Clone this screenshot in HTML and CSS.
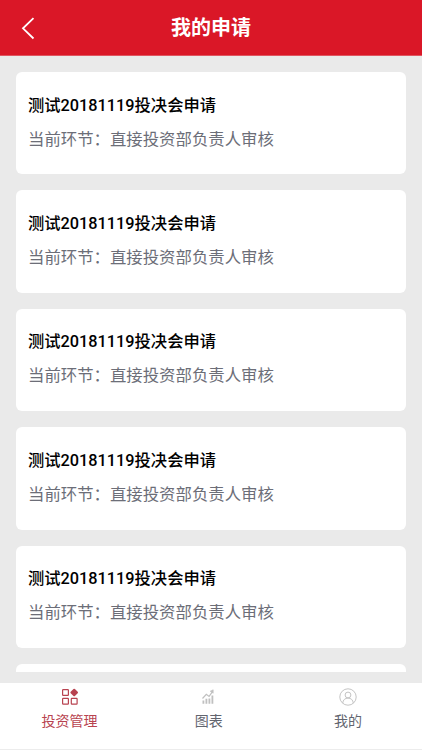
FILE: index.html
```
<!DOCTYPE html>
<html lang="zh-CN">

<head>
    <meta charset="UTF-8" />
    <meta name="viewport" content="width=device-width, initial-scale=1.0" />
    <title>我的申请</title>
    <link rel="stylesheet" href="styles.css">
</head>

<body>
    <header class="navbar">
        <a class="back" href="#" aria-label="返回">
            <svg width="14" height="24" viewBox="0 0 14 24" fill="none" stroke="#fff" stroke-width="1.8">
                <path d="M12.5 2.2 2 12.3l10.5 10.2" />
            </svg>
        </a>
        <h1>我的申请</h1>
    </header>

    <main class="list">
        <div class="card">
            <h2>测试20181119投决会申请</h2>
            <p>当前环节：直接投资部负责人审核</p>
        </div>
        <div class="card">
            <h2>测试20181119投决会申请</h2>
            <p>当前环节：直接投资部负责人审核</p>
        </div>
        <div class="card">
            <h2>测试20181119投决会申请</h2>
            <p>当前环节：直接投资部负责人审核</p>
        </div>
        <div class="card">
            <h2>测试20181119投决会申请</h2>
            <p>当前环节：直接投资部负责人审核</p>
        </div>
        <div class="card">
            <h2>测试20181119投决会申请</h2>
            <p>当前环节：直接投资部负责人审核</p>
        </div>
        <!-- next card, cut off by the scroll area -->
        <div class="card"></div>
    </main>

    <nav class="tabbar">
        <a class="tab active" href="#">
            <svg width="18" height="18" viewBox="0 0 18 18" fill="none" stroke="currentColor" stroke-width="1.2">
                <rect x="1.6" y="1.6" width="5.8" height="5.8" rx=".6" />
                <path d="M13.2 1.7l2.8 2.8-2.8 2.8-2.8-2.8z" fill="currentColor" stroke-width="2" stroke-linejoin="round" />
                <rect x="1.6" y="10.3" width="5.8" height="5.8" rx=".6" />
                <rect x="10.3" y="10.3" width="5.8" height="5.8" rx=".6" />
            </svg>
            <span>投资管理</span>
        </a>
        <a class="tab" href="#">
            <svg width="18" height="18" viewBox="0 0 18 18" fill="none" stroke="#c0c0c0" stroke-width="1.2">
                <path d="M2.5 10.5 6.3 6.3l2.8 2.1 3.6-5" />
                <path d="M10.2 3.2l3-1.4v3.4z" fill="#c0c0c0" stroke-width=".6" />
                <path d="M3.4 15.8v-3.3M6.4 15.8v-5M9.4 15.8v-5.2M12.4 15.8V7.5" stroke-width="1.8" />
            </svg>
            <span>图表</span>
        </a>
        <a class="tab" href="#">
            <svg width="18" height="18" viewBox="0 0 18 18" fill="none" stroke="#c4c4c4" stroke-width="1">
                <circle cx="9" cy="9" r="8.2" />
                <circle cx="9" cy="7" r="2.9" />
                <path d="M3.7 15.1c.3-3.2 2.4-5 5.3-5s5 1.8 5.3 5" />
            </svg>
            <span>我的</span>
        </a>
    </nav>
</body>

</html>
```

FILE: styles.css
```
* {
    box-sizing: border-box;
}

body {
    font-family: Roboto, "Noto Sans CJK SC", sans-serif;
    background: #eaeaea;
    margin: 0;
    height: 750px;
    display: flex;
    flex-direction: column;
    overflow: hidden;
}

a {
    text-decoration: none;
}

h1,
h2,
p {
    margin: 0;
}

.navbar {
    flex: none;
    height: 56px;
    padding: 0 21px;
    background: #da1727;
    border-bottom: 1px solid #e05560;
    display: grid;
    grid-template-columns: 40px 1fr 40px;
    align-items: center;
}

.back {
    height: 24px;
}

.back svg {
    display: block;
}

.navbar h1 {
    font-size: 20px;
    line-height: 28px;
    font-weight: 700;
    text-align: center;
    color: #fff;
}

.list {
    flex: none;
    height: 616px;
    padding: 16px 16.5px 0 16px;
    overflow: hidden;
}

.card {
    height: 102.4px;
    margin-bottom: 16px;
    padding: 20.6px 12px;
    background: #fff;
    border-radius: 6px;
}

.card h2 {
    font-size: 16.3px;
    line-height: 26px;
    font-weight: 500;
    color: #000;
}

.card p {
    margin-top: 8px;
    font-size: 16.4px;
    line-height: 26px;
    font-weight: 400;
    color: #6c6e78;
}

.tabbar {
    flex: none;
    height: 67.5px;
    margin-top: 10.5px;
    padding-right: 4.5px;
    background: #fff;
    border-bottom: 1px solid #ececec;
    display: flex;
}

.tab {
    flex: 1;
    padding-top: 5px;
    display: flex;
    flex-direction: column;
    align-items: center;
    font-size: 14px;
    line-height: 20px;
    color: #62656f;
}

.tab svg {
    margin-bottom: 5px;
}

.tab.active {
    color: #b84350;
}
```
